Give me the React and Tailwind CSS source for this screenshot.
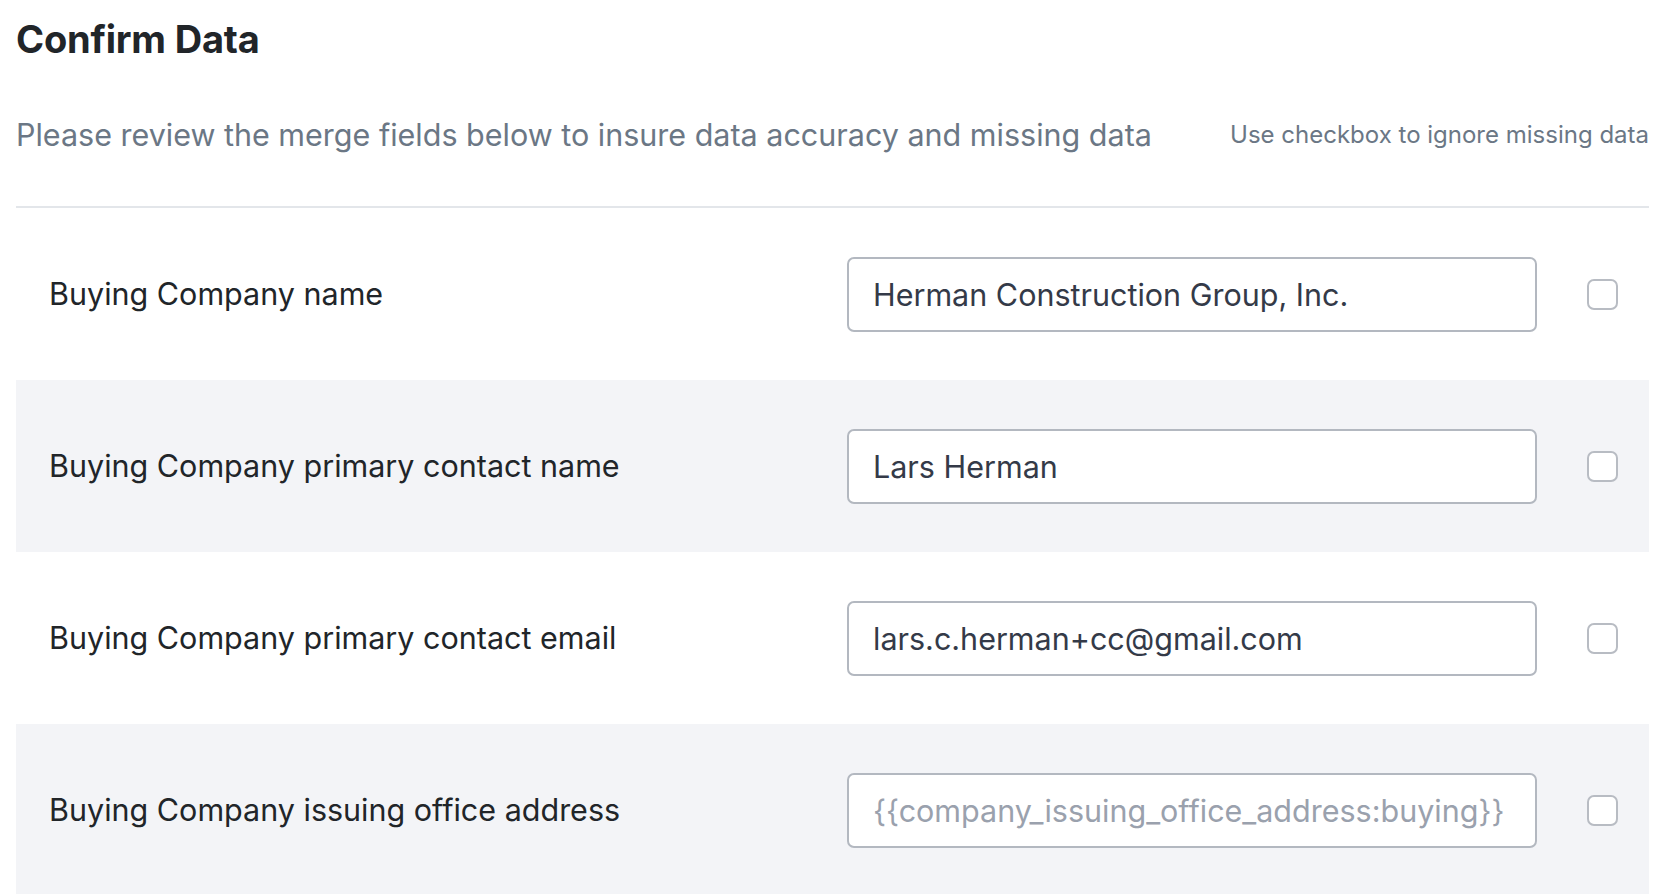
import { useState } from "react";

const FIELDS = [
  { label: "Buying Company name", value: "Herman Construction Group, Inc." },
  { label: "Buying Company primary contact name", value: "Lars Herman" },
  { label: "Buying Company primary contact email", value: "lars.c.herman+cc@gmail.com" },
  { label: "Buying Company issuing office address", value: "", placeholder: "{{company_issuing_office_address:buying}}" },
];

export default function App() {
  const [values, setValues] = useState(() => FIELDS.map((f) => f.value));
  const [ignored, setIgnored] = useState(() => FIELDS.map(() => false));

  return (
    <div className="min-h-screen bg-white pl-4 pr-[21px] pt-[16px] font-['Inter',sans-serif]">
      <h1 className="text-[38px] leading-[46px] font-bold text-[#212529] tracking-[-0.2px]">Confirm Data</h1>

      <div className="mt-[55px] flex items-center justify-between border-b-2 border-[#e3e6ea] pb-[53px]">
        <p className="text-[30.5px] leading-[36px] text-[#6b7785]">
          Please review the merge fields below to insure data accuracy and missing data
        </p>
        <span className="text-[24px] leading-[30px] text-[#6b7785]">Use checkbox to ignore missing data</span>
      </div>

      <div>
        {FIELDS.map((f, i) => (
          <div
            key={f.label}
            className={`flex h-[172px] items-center pl-[33px] pr-[31px] ${i % 2 === 1 ? "bg-[#f3f4f7]" : "bg-white"}`}
          >
            <div className="flex-1 text-[30.5px] text-[#212529]">{f.label}</div>
            <input
              className="h-[75px] w-[690px] rounded-[7px] border-2 border-[#b3b8c0] bg-white px-[24px] text-[30.5px] text-[#343a48] outline-none placeholder:text-[#9aa1ad]"
              value={values[i]}
              placeholder={f.placeholder}
              onChange={(e) => setValues(values.map((v, j) => (j === i ? e.target.value : v)))}
            />
            <input
              type="checkbox"
              className="ml-[50px] h-[31px] w-[31px] appearance-none rounded-[7px] border-2 border-[#b8bcc3] bg-white checked:bg-[#3b82f6]"
              checked={ignored[i]}
              onChange={() => setIgnored(ignored.map((v, j) => (j === i ? !v : v)))}
            />
          </div>
        ))}
      </div>
    </div>
  );
}
